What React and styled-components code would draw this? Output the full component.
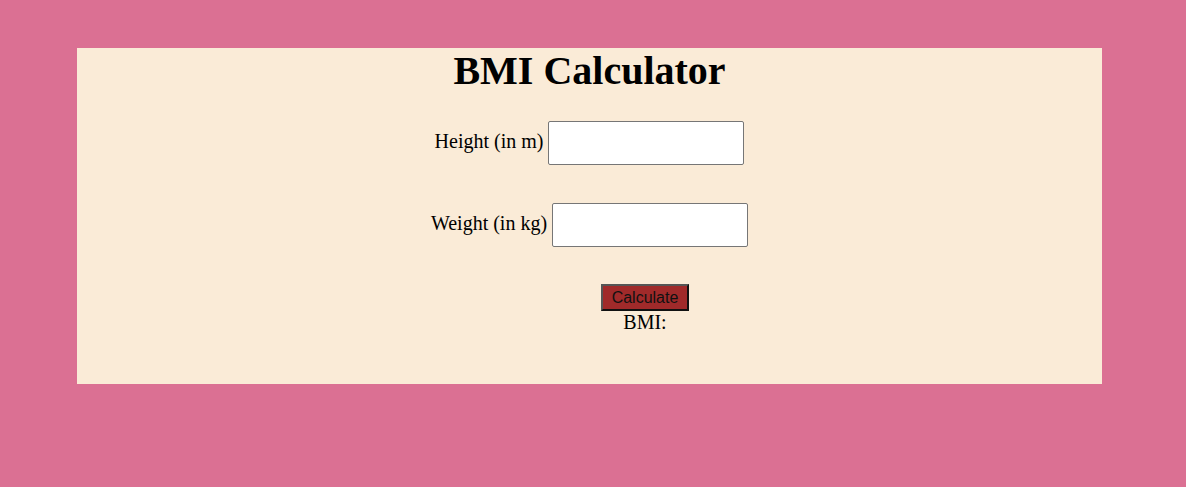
import React, { useState } from "react";
import styled, { createGlobalStyle } from "styled-components";

const GlobalStyle = createGlobalStyle`
  html, body {
    margin: 0;
    padding: 0;
    background: #db7093;
    height: 100%;
  }
  body {
    padding: 48px 0 0 77px;
    box-sizing: border-box;
    font-family: "Liberation Serif", "Times New Roman", serif;
  }
`;

const Card = styled.div`
  width: 1025px;
  height: 336px;
  background: #faebd7;
  display: flex;
  flex-direction: column;
  align-items: center;
`;

const Title = styled.h1`
  margin: 0;
  font-size: 40px;
  font-weight: bold;
  color: #000;
  line-height: 46px;
`;

const Row = styled.div`
  display: flex;
  align-items: center;
  gap: 5px;
  margin-top: ${(p) => p.top}px;
`;

const Label = styled.label`
  font-size: 20px;
  color: #000;
  padding-bottom: 3px;
`;

const Input = styled.input`
  width: 196px;
  height: 44px;
  box-sizing: border-box;
  border: 1px solid #767676;
  border-radius: 2px;
  background: #fff;
  font-size: 18px;
  padding: 0 6px;
`;

const Actions = styled.div`
  margin-top: 37px;
  padding-left: 111px;
  display: flex;
  flex-direction: column;
  align-items: center;
`;

const Button = styled.button`
  width: 88px;
  height: 27px;
  box-sizing: border-box;
  background: #a02a2a;
  color: #111;
  font-family: "Liberation Sans", Arial, sans-serif;
  font-size: 16px;
  padding: 0;
  border: 2px solid;
  border-color: #555 #111 #111 #555;
  cursor: pointer;
`;

const Result = styled.div`
  font-size: 20px;
  line-height: 23px;
  color: #000;
`;

export default function App() {
  const [height, setHeight] = useState("");
  const [weight, setWeight] = useState("");
  const [bmi, setBmi] = useState("");

  const calculate = () => {
    const h = parseFloat(height);
    const w = parseFloat(weight);
    if (h > 0 && w > 0) setBmi((w / (h * h)).toFixed(2));
  };

  return (
    <>
      <GlobalStyle />
      <Card>
        <Title>BMI Calculator</Title>
        <Row top={27}>
          <Label>Height (in m)</Label>
          <Input value={height} onChange={(e) => setHeight(e.target.value)} />
        </Row>
        <Row top={38}>
          <Label>Weight (in kg)</Label>
          <Input value={weight} onChange={(e) => setWeight(e.target.value)} />
        </Row>
        <Actions>
          <Button onClick={calculate}>Calculate</Button>
          <Result>BMI: {bmi}</Result>
        </Actions>
      </Card>
    </>
  );
}
